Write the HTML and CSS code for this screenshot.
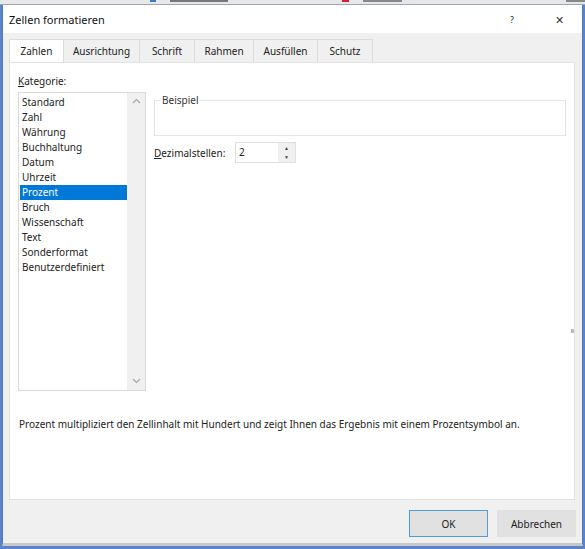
FILE: index.html
```html
<!DOCTYPE html>
<html lang="de">
<head>
<meta charset="utf-8">
<title>Zellen formatieren</title>
<link rel="stylesheet" href="styles.css">
</head>
<body>
<div class="strip">
  <span class="frag f1"></span><span class="frag f2"></span><span class="frag f3"></span><span class="frag f4"></span><span class="frag f5"></span>
</div>
<div class="dialog">
  <div class="titlebar">
    <span class="title">Zellen formatieren</span>
    <span class="tb-help">?</span>
    <span class="tb-close">✕</span>
  </div>
  <div class="tabs">
    <div class="tab active">Zahlen</div>
    <div class="tab">Ausrichtung</div>
    <div class="tab">Schrift</div>
    <div class="tab">Rahmen</div>
    <div class="tab">Ausfüllen</div>
    <div class="tab">Schutz</div>
  </div>
  <div class="panel">
    <div class="cols">
      <div class="leftcol">
        <div class="label"><u>K</u>ategorie:</div>
        <div class="listbox">
          <ul class="items">
            <li>Standard</li>
            <li>Zahl</li>
            <li>Währung</li>
            <li>Buchhaltung</li>
            <li>Datum</li>
            <li>Uhrzeit</li>
            <li class="sel">Prozent</li>
            <li>Bruch</li>
            <li>Wissenschaft</li>
            <li>Text</li>
            <li>Sonderformat</li>
            <li>Benutzerdefiniert</li>
          </ul>
          <div class="vscroll">
            <svg class="arr" width="9" height="6" viewBox="0 0 9 6"><path d="M1 5 L4.5 1.5 L8 5" fill="none" stroke="#a6a6a6" stroke-width="1.2"/></svg>
            <svg class="arr" width="9" height="6" viewBox="0 0 9 6"><path d="M1 1 L4.5 4.5 L8 1" fill="none" stroke="#a6a6a6" stroke-width="1.2"/></svg>
          </div>
        </div>
      </div>
      <div class="rightcol">
        <div class="group"><span class="legend">Beispiel</span></div>
        <div class="decrow">
          <span class="declabel"><u>D</u>ezimalstellen:</span>
          <div class="spin">
            <span class="spinval">2</span>
            <div class="spinbtns">
              <span class="sb">▲</span>
              <span class="sb">▼</span>
            </div>
          </div>
        </div>
      </div>
    </div>
    <p class="desc">Prozent multipliziert den Zellinhalt mit Hundert und zeigt Ihnen das Ergebnis mit einem Prozentsymbol an.</p>
    <span class="grip"></span>
  </div>
  <div class="footer">
    <button class="btn ok">OK</button>
    <button class="btn">Abbrechen</button>
  </div>
</div>
</body>
</html>
```
FILE: styles.css
```css
* { box-sizing: border-box; }
html, body { margin: 0; padding: 0; }
body {
  width: 585px;
  height: 549px;
  background: #5b84c8;
  font-family: "Noto Sans", "Open Sans", sans-serif;
  font-size: 10px;
  color: #222;
  overflow: hidden;
}
.strip {
  height: 5px;
  background: #e8e8e8;
  border-bottom: 1px solid #9aa6b8;
  display: flex;
  gap: 14px;
  padding-left: 150px;
  align-items: flex-start;
}
.frag { display: block; height: 2px; background: #555; }
.f1 { width: 6px; background: #3b78c8; }
.f2 { width: 60px; background: #777; }
.f3 { width: 8px; background: #c23; margin-left: 100px; }
.f4 { width: 40px; background: #888; }
.f5 { width: 20px; background: #888; margin-left: 150px; }
.dialog {
  margin-left: 2px;
  width: 581px;
  height: 541px;
  background: #f0f0f0;
  border-left: 1px solid #4a7ccc;
  border-right: 1px solid #4a7ccc;
  border-bottom: 3px solid #c8c8c8;
  display: flex;
  flex-direction: column;
}
.titlebar {
  height: 28px;
  background: #fff;
  display: flex;
  align-items: center;
  padding-left: 6px;
  font-size: 11px;
  color: #111;
}
.title { flex: 1; }
.tb-help { font-size: 8px; width: 20px; margin-right: 27px; text-align: center; }
.tb-close { font-size: 11px; width: 20px; margin-right: 13px; text-align: center; color: #333; }
.tabs {
  display: flex;
  margin: 6px 0 0 6px;
  height: 23px;
}
.tab {
  display: flex;
  align-items: center;
  justify-content: center;
  padding: 0 8px;
  border: 1px solid #dcdcdc;
  border-bottom: none;
  border-left: none;
  background: #f0f0f0;
  color: #222;
}
.tab:nth-child(1) { width: 55px; border-left: 1px solid #dcdcdc; }
.tab:nth-child(2) { width: 76px; }
.tab:nth-child(3) { width: 55px; }
.tab:nth-child(4) { width: 59px; }
.tab:nth-child(5) { width: 64px; }
.tab:nth-child(6) { width: 55px; }
.tab.active { background: #fff; }
.panel {
  position: relative;
  margin: 0 7px 0 6px;
  height: 438px;
  background: #fff;
  border: 1px solid #e3e3e3;
  padding: 8px 0 0 8px;
}
.cols { display: flex; gap: 8px; }
.leftcol { width: 128px; display: flex; flex-direction: column; }
.label { height: 21px; line-height: 20px; }
.label u, .declabel u { text-decoration: underline; text-underline-offset: 1px; }
.listbox {
  height: 299px;
  border: 1px solid #dadada;
  display: flex;
}
.items {
  list-style: none;
  margin: 0;
  padding: 2px 0 0 1px;
  flex: 1;
}
.items li { height: 15px; line-height: 15px; padding-left: 2px; white-space: nowrap; }
.items li.sel { background: #0078d7; color: #fff; }
.vscroll {
  width: 18px;
  background: #f0f0f0;
  display: flex;
  flex-direction: column;
  justify-content: space-between;
  align-items: center;
  padding: 5px 0 6px;
}
.rightcol { flex: 1; padding-top: 29px; padding-right: 8px; }
.group {
  position: relative;
  height: 36px;
  border: 1px solid #e5e5e5;
}
.legend {
  position: absolute;
  left: 5px;
  top: -7px;
  padding: 0 2px;
  background: #fff;
  line-height: 13px;
  color: #333;
}
.decrow { display: flex; align-items: center; margin-top: 6px; gap: 7px; }
.declabel { width: 74px; }
.spin {
  width: 61px;
  height: 21px;
  border: 1px solid #e0e0e0;
  display: flex;
}
.spinval { flex: 1; padding-left: 3px; line-height: 19px; }
.spinbtns {
  width: 17px;
  background: #f0f0f0;
  display: flex;
  flex-direction: column;
}
.sb {
  flex: 1;
  font-size: 5px;
  display: flex;
  align-items: center;
  justify-content: center;
  color: #444;
}
.desc { margin: 26px 0 0 1px; line-height: 14px; white-space: nowrap; }
.grip {
  position: absolute;
  right: 0;
  top: 266px;
  width: 3px;
  height: 4px;
  background: #bbb;
}
.footer {
  display: flex;
  justify-content: flex-end;
  gap: 9px;
  padding: 10px 6px 0 0;
}
.btn {
  width: 79px;
  height: 27px;
  font: inherit;
  color: #222;
  background: #e1e1e1;
  border: 1px solid #e1e1e1;
}
.btn.ok { border-color: #4d9de0; }
```
